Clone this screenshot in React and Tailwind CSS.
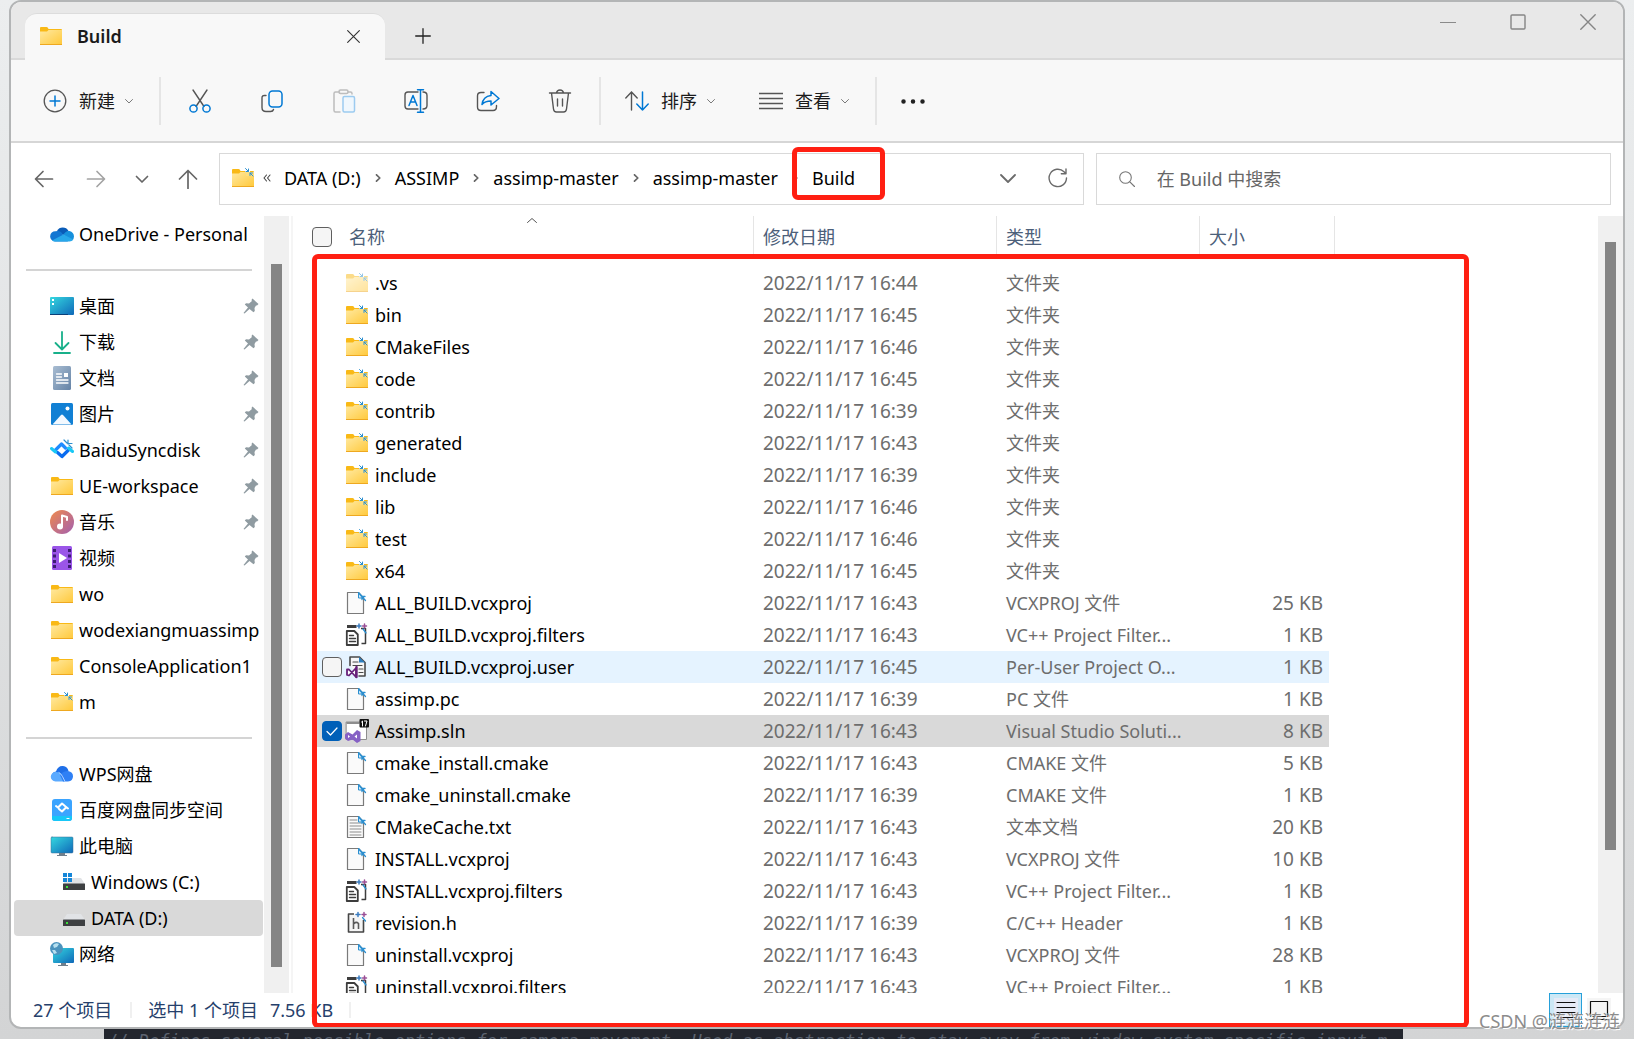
import React, { useState } from 'react';

const Svg = ({ className = 'w-6 h-6', viewBox = '0 0 24 24', children }) => (
  <svg
    className={`shrink-0 ${className}`}
    viewBox={viewBox}
    fill="none"
    strokeWidth="1.5"
    strokeLinecap="round"
    strokeLinejoin="round"
    aria-hidden="true"
  >
    {children}
  </svg>
);

// Two small arrows that mark an NTFS compressed item
const CompressedArrows = () => (
  <g stroke="#2b8fd0" strokeWidth="1">
    <path d="M14.500 2.500l3 3M17.500 3v2.500H15" />
    <path d="M22 10l-3-3M19 9.500V7h2.500" />
  </g>
);

const FolderIcon = ({ compressed, faded }) => (
  <Svg>
    <defs>
      <linearGradient id="folder" x1="0" y1="0" x2="1" y2="1">
        <stop offset="0" stopColor="#ffe9a0" />
        <stop offset="1" stopColor="#ffc93c" />
      </linearGradient>
    </defs>
    <g opacity={faded ? 0.5 : 1}>
      <path d="M1 4q0-1 1-1h5.500q1 0 1.500 1l.5 1h12.500q1 0 1 1v4H1z" fill="#f9b916" />
      <path d="M1 7.500h7l1.500-1.500H23v14.500H1z" fill="url(#folder)" />
      <path d="M1 20h22v1H1z" fill="#eea820" />
      {compressed && <path d="M14 2h5v4h-5z" fill="#fff" />}
      {compressed && <path d="M15 6h8v4h-8z" fill="#ffdf7e" />}
      {compressed && <CompressedArrows />}
    </g>
  </Svg>
);

const FileIcon = ({ lines }) => (
  <Svg>
    <path d="M2.500 1.500h11l5 5.500v15.500h-16z" fill="#fafafa" stroke="#7a7a7a" strokeWidth="1.2" />
    {lines && (
      <path d="M5 5h7M5 8h11M5 11h11M5 14h11M5 17h11M5 20h11" stroke="#8c8c8c" strokeWidth="1" />
    )}
    <path d="M13.500 1.500v5.500h5z" fill="#d7ecf8" stroke="#2b8fd0" strokeWidth="1" />
    <path d="M14 2.500l6.500 7M17 8.500v-3h3" stroke="#2b8fd0" strokeWidth="1.3" />
  </Svg>
);

const FiltersIcon = () => (
  <Svg>
    <path d="M2 3.500h9.500" stroke="#3d3d3d" strokeWidth="3" strokeLinecap="butt" />
    <path d="M16 5.500h4.500v15h-4" stroke="#3d3d3d" strokeLinecap="butt" />
    <path d="M1.800 8h7.500l3.500 3.500v10.500h-11z" fill="#fff" stroke="#3d3d3d" strokeWidth="1.800" />
    <path d="M4.500 12.500h4M4.500 15.500h6M4.500 18.500h6" stroke="#3d3d3d" strokeWidth="1.400" />
    <path d="M12 3h4M14 1v4" stroke="#3a7bbf" strokeWidth="1.500" />
    <path d="M17.500 3h4M19.500 1v4" stroke="#9b4f96" strokeWidth="1.500" />
    <path d="M21 10l-3-4" stroke="#2b8fd0" strokeWidth="1.300" />
  </Svg>
);

const UserProjectIcon = () => (
  <Svg>
    <path d="M5 10.500V2h9.500l5.500 5.500v13.500h-6" fill="#f7f7f7" stroke="#4a4a4a" strokeWidth="1.600" />
    <path d="M8 7h5M8 10.500h9M14 14h4M14 17.500h4" stroke="#4a4a4a" strokeWidth="1.200" />
    <path d="M14 2v5.500h6z" fill="#2d7fc0" />
    <path d="M2 14.500v5.500l2 .5 7-7.500v9l-7-7.500z" fill="#fff" stroke="#68217a" strokeWidth="1.800" />
    <path d="M11.500 12v10" stroke="#68217a" strokeWidth="2.400" />
  </Svg>
);

const SolutionIcon = () => (
  <Svg>
    <path d="M1.500 3h20v17.500h-20z" fill="#fff" stroke="#8e8e8e" strokeWidth="1" />
    <path d="M1.500 3h13v2h-13z" fill="#8e8e8e" />
    <path
      d="M0 15.500L3 13l4.500 2.500L12 11l3.500 2v9L12 24l-4.500-3.500L3 22l-3-2.500zM3 16v3l2-1.500zM12 15.500l-2.500 2 2.500 2z"
      fill="#8661c5"
      fillRule="evenodd"
    />
    <rect x="14.500" y="0" width="9.500" height="8.500" rx="1" fill="#111" />
    <path d="M16.500 3l1-1v5M19.500 2h2.500l-1.500 5" stroke="#fff" strokeWidth="1" />
  </Svg>
);

const HeaderIcon = () => (
  <Svg>
    <path
      d="M9 3H3.500v18h15V9"
      fill="#f5f5f5"
      stroke="#454545"
      strokeWidth="1.600"
      strokeLinecap="butt"
    />
    <path d="M8.500 7v11M8.500 13q2.500-3 5-.5V18" stroke="#5a5a5a" strokeWidth="1.600" strokeLinecap="butt" />
    <path d="M11 3.500h4M13 1.500v4" stroke="#3a7bbf" strokeWidth="1.500" />
    <path d="M17 3.500h4M19 1.500v4" stroke="#9b4f96" strokeWidth="1.500" />
    <path d="M20.500 10l-3-3.500" stroke="#2b8fd0" strokeWidth="1.300" />
  </Svg>
);

const FILE_ICONS = {
  hidden: <FolderIcon compressed faded />,
  folder: <FolderIcon compressed />,
  file: <FileIcon />,
  text: <FileIcon lines />,
  filters: <FiltersIcon />,
  user: <UserProjectIcon />,
  sln: <SolutionIcon />,
  header: <HeaderIcon />,
};

const OneDriveIcon = () => (
  <Svg>
    <path d="M7 9a6.500 6.500 0 0 1 11.500 0l-5 4z" fill="#0a5cb8" />
    <path d="M5 19.500A5 5 0 0 1 5.500 9.300q3-1 5.500.7l7 9.500z" fill="#1276d2" />
    <path d="M13.500 13q2-4.500 6-4 4.300 1 4.500 5.500a5 5 0 0 1-2 4z" fill="#1690dc" />
    <path d="M2 18.500l11.500-6 9.800 5q-1.300 2-3.800 2H5q-1.800 0-3-1z" fill="#28a8ea" />
  </Svg>
);

const DesktopIcon = () => (
  <Svg>
    <defs>
      <linearGradient id="screen" x1="0" y1="0" x2="1" y2="1">
        <stop offset="0" stopColor="#35d8e0" />
        <stop offset="1" stopColor="#0f68b8" />
      </linearGradient>
    </defs>
    <rect x="0" y="3" width="24" height="18" rx="1" fill="url(#screen)" />
    <path d="M2 5h2v2H2zM2 9h2v2H2z" fill="#fff" />
    <path d="M0 20h18v1H0z" fill="#0b3f78" />
  </Svg>
);

const DownloadIcon = () => (
  <Svg>
    <path d="M12 2v17M5.500 13l6.500 6.500 6.500-6.500M4 23h16" stroke="#18b08a" strokeWidth="1.800" />
  </Svg>
);

const DocumentsIcon = () => (
  <Svg>
    <defs>
      <linearGradient id="doc" x1="0" y1="0" x2="1" y2="1">
        <stop offset="0" stopColor="#a9bdd2" />
        <stop offset="1" stopColor="#6583a6" />
      </linearGradient>
    </defs>
    <rect x="3" y="0" width="18" height="24" rx="1.500" fill="url(#doc)" />
    <path d="M6.500 8h5M6.500 11h5M6.500 14h11.500M6.500 17h11.500" stroke="#fff" strokeWidth="1.300" />
    <path d="M14 7h4v4h-4z" fill="#fff" />
  </Svg>
);

const PicturesIcon = () => (
  <Svg>
    <rect x="1" y="1" width="22" height="22" rx="1.500" fill="#1180d4" />
    <circle cx="17.500" cy="6.500" r="2" fill="#fff" />
    <path d="M2.500 22.500l8.500-9.500q1-1 2 0l8.500 9.500z" fill="#f3f9ff" />
  </Svg>
);

const BaiduSyncIcon = () => (
  <Svg>
    <path d="M5 12.500l6.500-6.500 4 4" stroke="#1e8bff" strokeWidth="3.200" />
    <path d="M18.500 12l-6.500 6.500-4.500-4" stroke="#0a6cf0" strokeWidth="3.200" />
    <path d="M1.500 10.500l4 3.500M22.500 13.500l-4-3.500" stroke="#19c8f5" strokeWidth="3" />
    <path d="M14 2l3 3M22 10l-3-3M18 2v4M22 5.500h-3" stroke="#2b8fd0" strokeWidth="1.200" />
  </Svg>
);

const MusicIcon = () => (
  <Svg>
    <defs>
      <linearGradient id="music" x1="0" y1="0" x2="1" y2="1">
        <stop offset="0" stopColor="#f08a4c" />
        <stop offset="1" stopColor="#a35fb0" />
      </linearGradient>
    </defs>
    <circle cx="12" cy="12" r="12" fill="url(#music)" />
    <circle cx="10" cy="16.500" r="3" fill="#fff" />
    <path d="M12 16.500V5.500l5 1.500v3" stroke="#fff" strokeWidth="2" />
  </Svg>
);

const VideoIcon = () => (
  <Svg>
    <rect x="2" y="0" width="20" height="24" rx="1.500" fill="#9a55e8" />
    <path
      d="M3 3h3v3H3zM3 8.500h3v3H3zM3 14h3v3H3zM3 19h3v3H3zM18 3h3v3h-3zM18 8.500h3v3h-3zM18 14h3v3h-3zM18 19h3v3h-3z"
      fill="#3c1d73"
    />
    <path d="M9 7v10l8-5z" fill="#fff" />
  </Svg>
);

const WpsIcon = () => (
  <Svg>
    <path d="M6 19a4.800 4.800 0 0 1 0-9.500q2-6 7-5.500 4.500.5 5.500 5z" fill="#1f6fe8" />
    <path d="M5.500 19.500a4.700 4.700 0 0 1 0-9.500q5-.5 7 4l3 5.500z" fill="#5aaaff" />
    <path d="M13 19.500l-3-6.500q3-4 8-4 5 .8 5 5.300 0 5-5 5.200z" fill="#2f80f5" />
    <path d="M9 10.500q2 1 3.500 4l2.500 5" stroke="#cfe5ff" strokeWidth="0.800" />
  </Svg>
);

const BaiduSpaceIcon = () => (
  <Svg>
    <rect x="2" y="1" width="20" height="22" rx="3" fill="#3ba4ff" />
    <path d="M2 18h20v2q0 3-3 3H5q-3 0-3-3z" fill="#18c7f7" />
    <path d="M8 9.500l4-4 3 2.500M16 9.500l-4 4-3-2.500M6 8l2.500 2M18 10.500L15.500 8.500" stroke="#fff" strokeWidth="2" />
    <path d="M17 20.500h2" stroke="#fff" strokeWidth="1.200" />
  </Svg>
);

const ComputerIcon = () => (
  <Svg>
    <rect x="1" y="3" width="22" height="16" rx="1" fill="url(#screen)" stroke="#3b6f96" strokeWidth="0.500" />
    <path d="M9 19h6v2h2v1H7v-1h2z" fill="#6f7f8c" />
  </Svg>
);

const DriveIcon = ({ system }) => (
  <Svg>
    <path d="M5 8h14l4 6H1z" fill="#e1e3e6" />
    <rect x="1" y="13.500" width="22" height="6.500" rx="0.500" fill="#3e4042" />
    <path d="M4 16h2v2H4z" fill="#3ae03a" />
    {system && (
      <path d="M1 3h4v4H1zM6 3h4v4H6zM1 8h4v4H1zM6 8h4v4H6z" fill="#1586d8" />
    )}
  </Svg>
);

const NetworkIcon = () => (
  <Svg>
    <rect x="3" y="6" width="21" height="15" rx="1" fill="url(#screen)" />
    <path d="M11 21h5v2h2v1H8v-1h3z" fill="#6f7f8c" />
    <circle cx="6.500" cy="6.500" r="6.500" fill="#4b93bd" />
    <path d="M3 3q3-3 6-1l-2 3-3 1zM2 8l3 0 2 3-3 1z" fill="#b7e0ef" />
  </Svg>
);

const PinIcon = () => (
  <Svg className="w-4 h-4" viewBox="0 0 16 16">
    <path d="M9.500.500L15.500 6l-1.500 1.500-1 0-1.500 2.500.3 3-1.300 1.300L6.500 11l-5 4.500-1-.5L5 9.500 1.800 6.500 3 5.200l3 .2 2.700-2.200V1.500z" fill="#8f9ba1" />
  </Svg>
);

const ChevronDown = ({ className = 'w-2 h-2', color = '#6b6b6b' }) => (
  <Svg className={className} viewBox="0 0 8 8">
    <path d="M.5 2.500L4 6l3.500-3.500" stroke={color} strokeWidth="0.900" />
  </Svg>
);

const Close = ({ className, color }) => (
  <Svg className={className} viewBox="0 0 14 14">
    <path d="M.7.700l12.600 12.600M13.300.700L.7 13.300" stroke={color} strokeWidth="1.200" />
  </Svg>
);

const PINNED = [
  { label: '桌面', icon: <DesktopIcon />, pinned: true },
  { label: '下载', icon: <DownloadIcon />, pinned: true },
  { label: '文档', icon: <DocumentsIcon />, pinned: true },
  { label: '图片', icon: <PicturesIcon />, pinned: true },
  { label: 'BaiduSyncdisk', icon: <BaiduSyncIcon />, pinned: true },
  { label: 'UE-workspace', icon: <FolderIcon />, pinned: true },
  { label: '音乐', icon: <MusicIcon />, pinned: true },
  { label: '视频', icon: <VideoIcon />, pinned: true },
  { label: 'wo', icon: <FolderIcon /> },
  { label: 'wodexiangmuassimp', icon: <FolderIcon /> },
  { label: 'ConsoleApplication1', icon: <FolderIcon /> },
  { label: 'm', icon: <FolderIcon compressed /> },
];

const PLACES = [
  { label: 'WPS网盘', icon: <WpsIcon /> },
  { label: '百度网盘同步空间', icon: <BaiduSpaceIcon /> },
  { label: '此电脑', icon: <ComputerIcon /> },
  { label: 'Windows (C:)', icon: <DriveIcon system />, nested: true },
  { label: 'DATA (D:)', icon: <DriveIcon />, nested: true, active: true },
  { label: '网络', icon: <NetworkIcon /> },
];

const FILES = [
  ['hidden', '.vs', '16:44', '文件夹', ''],
  ['folder', 'bin', '16:45', '文件夹', ''],
  ['folder', 'CMakeFiles', '16:46', '文件夹', ''],
  ['folder', 'code', '16:45', '文件夹', ''],
  ['folder', 'contrib', '16:39', '文件夹', ''],
  ['folder', 'generated', '16:43', '文件夹', ''],
  ['folder', 'include', '16:39', '文件夹', ''],
  ['folder', 'lib', '16:46', '文件夹', ''],
  ['folder', 'test', '16:46', '文件夹', ''],
  ['folder', 'x64', '16:45', '文件夹', ''],
  ['file', 'ALL_BUILD.vcxproj', '16:43', 'VCXPROJ 文件', '25 KB'],
  ['filters', 'ALL_BUILD.vcxproj.filters', '16:43', 'VC++ Project Filter...', '1 KB'],
  ['user', 'ALL_BUILD.vcxproj.user', '16:45', 'Per-User Project O...', '1 KB'],
  ['file', 'assimp.pc', '16:39', 'PC 文件', '1 KB'],
  ['sln', 'Assimp.sln', '16:43', 'Visual Studio Soluti...', '8 KB'],
  ['file', 'cmake_install.cmake', '16:43', 'CMAKE 文件', '5 KB'],
  ['file', 'cmake_uninstall.cmake', '16:39', 'CMAKE 文件', '1 KB'],
  ['text', 'CMakeCache.txt', '16:43', '文本文档', '20 KB'],
  ['file', 'INSTALL.vcxproj', '16:43', 'VCXPROJ 文件', '10 KB'],
  ['filters', 'INSTALL.vcxproj.filters', '16:43', 'VC++ Project Filter...', '1 KB'],
  ['header', 'revision.h', '16:39', 'C/C++ Header', '1 KB'],
  ['file', 'uninstall.vcxproj', '16:43', 'VCXPROJ 文件', '28 KB'],
  ['filters', 'uninstall.vcxproj.filters', '16:43', 'VC++ Project Filter...', '1 KB'],
];

const CRUMBS = ['DATA (D:)', 'ASSIMP', 'assimp-master', 'assimp-master', 'Build'];

const CHECKBOX =
  'block w-5 h-5 appearance-none rounded border border-[#5f5f5f] bg-[#f5f5f5] checked:border-[#005fb8] checked:bg-[#005fb8]';

const TitleBar = () => (
  <header className="flex h-[58px] shrink-0 border-b-2 border-[#d9d9d9] bg-[#e8e8e8]">
    <div className="relative mt-[11px] -mb-0.5 ml-3.5 flex w-[360px] items-center rounded-t-xl border-t border-[#dcdcdc] bg-[#f8f8f8] pr-[25px] pb-0.5 pl-3.5">
      <FolderIcon />
      <h1 className="ml-3.5 flex-1 font-semibold text-[#1b1b1b]">Build</h1>
      <button type="button" aria-label="关闭标签页">
        <Close className="w-[13px] h-[13px]" color="#333" />
      </button>
    </div>
    <button type="button" aria-label="新标签页" className="ml-[30px] mt-3">
      <Svg className="w-4 h-4" viewBox="0 0 16 16">
        <path d="M8 .7v14.600M.7 8h14.600" stroke="#222" strokeWidth="1.300" />
      </Svg>
    </button>
    <div className="ml-auto flex h-10">
      <button type="button" aria-label="最小化" className="flex w-[70px] items-center justify-center">
        <Svg className="w-4 h-4" viewBox="0 0 16 16">
          <path d="M0 8.500h16" stroke="#8a8a8a" strokeWidth="1" />
        </Svg>
      </button>
      <button type="button" aria-label="最大化" className="flex w-[70px] items-center justify-center">
        <Svg className="w-4 h-4" viewBox="0 0 16 16">
          <rect x="1" y="1" width="14" height="14" rx="1" stroke="#858585" strokeWidth="1.400" />
        </Svg>
      </button>
      <button type="button" aria-label="关闭" className="flex w-[70px] items-center justify-center">
        <Close className="w-4 h-4" color="#858585" />
      </button>
    </div>
  </header>
);

const ToolButton = ({ label, children }) => (
  <button type="button" aria-label={label} className="flex h-12 w-[72px] items-center justify-center">
    {children}
  </button>
);

const Separator = () => <div className="h-12 w-0.5 shrink-0 bg-[#e5e5e5]" />;

const Toolbar = () => (
  <div className="flex h-[83px] shrink-0 items-center border-b-2 border-[#d6d6d6] bg-[#f8f8f8] text-[#1b1b1b]">
    <button type="button" className="flex w-[148px] items-center pl-8">
      <Svg>
        <circle cx="12" cy="12" r="10.800" stroke="#555" strokeWidth="1.300" />
        <path d="M12 7v10M7 12h10" stroke="#0078d4" />
      </Svg>
      <span className="mr-2.5 ml-3">新建</span>
      <ChevronDown />
    </button>
    <Separator />
    <div className="mx-[3px] flex">
      <ToolButton label="剪切">
        <Svg>
          <path d="M5 1l11 16.500M19 1L8 17.500" stroke="#555" strokeWidth="1.400" />
          <circle cx="5.500" cy="19.500" r="3.600" stroke="#0078d4" />
          <circle cx="18.500" cy="19.500" r="3.600" stroke="#0078d4" />
        </Svg>
      </ToolButton>
      <ToolButton label="复制">
        <Svg>
          <path d="M6 6.500H4.500q-2.500 0-2.500 2.500v9.500q0 4 4 4h4.500q2.500 0 3-2" stroke="#555" strokeWidth="1.400" />
          <rect x="9" y="2" width="13" height="16" rx="3.500" stroke="#0078d4" />
        </Svg>
      </ToolButton>
      <ToolButton label="粘贴">
        <Svg>
          <path d="M7.500 3H3.500Q2 3 2 4.500v17Q2 23 3.500 23H8M16 3h2.500Q20 3 20 4.500V5" stroke="#bdbdbd" strokeWidth="1.500" />
          <rect x="7" y="1" width="9" height="3.500" rx="1.500" stroke="#bdbdbd" />
          <rect x="11" y="7.500" width="11.500" height="15.500" rx="1.500" stroke="#9ccbf0" fill="#f0f7fd" />
        </Svg>
      </ToolButton>
      <ToolButton label="重命名">
        <Svg>
          <path d="M14 3H4Q1 3 1 6v11q0 3 3 3h10M19 3q4 0 4 3.500v10q0 3.500-4 3.500" stroke="#555" strokeWidth="1.400" />
          <path d="M5 16.500l4-10 4 10M6.500 13h5M16.500 1v22M13.500.8h6M13.500 23.200h6" stroke="#0078d4" />
        </Svg>
      </ToolButton>
      <ToolButton label="共享">
        <Svg>
          <path d="M8 3.500H5Q1.500 3.500 1.500 7v11q0 3.500 3.500 3.500h12q3.500 0 3.500-4v-1" stroke="#555" strokeWidth="1.400" />
          <path d="M15 2.500l8 7-8 6.500v-4q-6 0-9 3.500Q7 7.500 15 6.500z" stroke="#0078d4" />
        </Svg>
      </ToolButton>
      <ToolButton label="删除">
        <Svg>
          <path d="M1.500 4h21M8.500 4Q9 1 12 1t3.500 3M3.500 4l2 16q.3 3 3 3h7q2.700 0 3-3l2-16M9.500 10v7M14.500 10v7" stroke="#555" strokeWidth="1.400" />
        </Svg>
      </ToolButton>
    </div>
    <Separator />
    <button type="button" className="ml-6 flex items-center">
      <Svg>
        <path d="M6.500 21V3M.8 9l5.700-6 5.700 6" stroke="#555" strokeWidth="1.400" />
        <path d="M17.500 3v18M11.800 15l5.700 6 5.700-6" stroke="#0078d4" />
      </Svg>
      <span className="mr-2.5 ml-3">排序</span>
      <ChevronDown />
    </button>
    <button type="button" className="mr-[26px] ml-11 flex items-center">
      <Svg>
        <path d="M0 4.500h24M0 9.500h24M0 14.500h24M0 19.500h24" stroke="#555" strokeWidth="1.300" />
      </Svg>
      <span className="mr-2.5 ml-3">查看</span>
      <ChevronDown />
    </button>
    <Separator />
    <button type="button" aria-label="更多" className="ml-6">
      <Svg>
        <path d="M2.500 12.500h.01M12 12.500h.01M21.500 12.500h.01" stroke="#222" strokeWidth="4.500" />
      </Svg>
    </button>
  </div>
);

const AddressBar = () => (
  <div className="flex h-[73px] shrink-0 items-start pt-2.5 pr-3 pl-[7px]">
    <div className="flex h-[52px]">
      <button type="button" aria-label="后退" className="flex w-[52px] items-center justify-center">
        <Svg className="w-5 h-5" viewBox="0 0 20 20">
          <path d="M18.500 10H2M9 2.500L1.500 10 9 17.500" stroke="#666" strokeWidth="1.700" />
        </Svg>
      </button>
      <button type="button" aria-label="前进" className="flex w-[52px] items-center justify-center">
        <Svg className="w-5 h-5" viewBox="0 0 20 20">
          <path d="M1.500 10H18M11 2.500l7.500 7.500-7.500 7.500" stroke="#a3a3a3" strokeWidth="1.700" />
        </Svg>
      </button>
      <button type="button" aria-label="最近浏览的位置" className="flex w-10 items-center justify-center">
        <Svg className="w-4 h-4" viewBox="0 0 16 16">
          <path d="M2.500 5.500L8 11l5.500-5.500" stroke="#666" strokeWidth="1.700" />
        </Svg>
      </button>
      <button type="button" aria-label="向上" className="flex w-[52px] items-center justify-center">
        <Svg className="w-5 h-5" viewBox="0 0 20 20">
          <path d="M10 19.500V1.500M1.500 10L10 1.500l8.500 8.500" stroke="#666" strokeWidth="1.700" />
        </Svg>
      </button>
    </div>

    <nav className="ml-[5px] flex h-[52px] flex-[63_1_0%] items-center border border-[#d9d9d9] pr-[15px] pb-0.5 pl-[11px] whitespace-nowrap text-black">
      <FolderIcon compressed />
      <Svg className="w-2 h-2 ml-2" viewBox="0 0 8 8">
        <path d="M3.500 1L1 4l2.500 3M7 1L4.500 4 7 7" stroke="#444" strokeWidth="1.100" />
      </Svg>
      <ol className="ml-[13px] flex items-center gap-[13px]">
        {CRUMBS.map((crumb, i) => (
          <li key={i} className="flex items-center gap-[13px]">
            {i > 0 && (
              <Svg className="w-2 h-2" viewBox="0 0 8 8">
                <path d="M2.500.800L5.800 4 2.500 7.200" stroke="#666" strokeWidth="1.700" />
              </Svg>
            )}
            <a href="#" className="relative">
              {crumb}
              {i === CRUMBS.length - 1 && (
                <span className="absolute -top-[19px] -right-[30px] -bottom-2.5 -left-5 rounded-md border-5 border-[#ff1f12]" />
              )}
            </a>
          </li>
        ))}
      </ol>
      <button type="button" aria-label="历史记录" className="mr-8 ml-auto">
        <ChevronDown className="w-4 h-4" />
      </button>
      <button type="button" aria-label="刷新">
        <Svg className="w-5 h-5" viewBox="0 0 20 20">
          <path d="M18.500 10a8.700 8.700 0 1 1-2.500-6.200l1.500 1.500M18 1v4.700h-4.700" stroke="#6b6b6b" strokeWidth="1.400" />
        </Svg>
      </button>
    </nav>

    <label className="ml-3 flex h-[52px] flex-[37_1_0%] items-center border border-[#d9d9d9] pl-[22px]">
      <Svg className="w-4 h-4" viewBox="0 0 16 16">
        <circle cx="6.500" cy="6.500" r="5.800" stroke="#777" strokeWidth="1.100" />
        <path d="M10.800 10.800l4.700 4.700" stroke="#777" strokeWidth="1.200" />
      </Svg>
      <input
        type="search"
        aria-label="搜索"
        placeholder="在 Build 中搜索"
        className="ml-[22px] min-w-0 flex-1 outline-none placeholder:text-[#666]"
      />
    </label>
  </div>
);

const SidebarItem = ({ item }) => (
  <li className={`mr-px ml-[3px] rounded-sm ${item.active ? 'bg-[#d9d9d9]' : ''}`}>
    <a
      href="#"
      className={`flex h-9 items-center gap-[5px] pr-1 whitespace-nowrap ${item.nested ? 'pl-12' : 'pl-9'}`}
    >
      {item.icon}
      <span className="flex-1">{item.label}</span>
      {item.pinned && <PinIcon />}
    </a>
  </li>
);

const Divider = () => (
  <li className="flex h-9 items-center pr-3 pl-[15px]">
    <hr className="flex-1 border-t-2 border-[#d4d4d4]" />
  </li>
);

const Sidebar = () => (
  <aside className="flex w-[282px] shrink-0 border-r-2 border-[#f5f5f5] text-black">
    <ul className="w-[253px]">
      <SidebarItem item={{ label: 'OneDrive - Personal', icon: <OneDriveIcon /> }} />
      <Divider />
      {PINNED.map((item) => (
        <SidebarItem key={item.label} item={item} />
      ))}
      <Divider />
      {PLACES.map((item) => (
        <SidebarItem key={item.label} item={item} />
      ))}
    </ul>
    <div className="w-[25px] bg-[#f0f0f0] px-[7px] pt-12 pb-[26px]">
      <div className="h-full bg-[#858585]" />
    </div>
  </aside>
);

const ColumnHeader = ({ children }) => (
  <th className="p-0 align-top font-normal">
    <div className="flex h-[43px] items-center border-l border-[#e5e5e5] pb-0.5 pl-[9px]">{children}</div>
  </th>
);

const FileTable = () => {
  const [selected, setSelected] = useState('Assimp.sln');
  const hovered = 'ALL_BUILD.vcxproj.user';

  return (
    <main className="flex min-w-0 flex-1 justify-between">
      <table className="ml-[19px] w-[1023px] shrink-0 table-fixed self-start text-left whitespace-nowrap">
        <colgroup>
          <col className="w-[33px]" />
          <col className="w-[408px]" />
          <col className="w-[243px]" />
          <col className="w-[203px]" />
          <col className="w-[130px]" />
          <col className="w-[6px]" />
        </colgroup>
        <thead className="text-[#4c607a]">
          <tr className="h-[51px]">
            <th className="p-0 align-top">
              <div className="flex h-[43px] items-center pb-0.5">
                <input type="checkbox" aria-label="全选" className={CHECKBOX} />
              </div>
            </th>
            <th className="relative p-0 align-top font-normal">
              <div className="flex h-[43px] items-center pb-0.5 pl-1">名称</div>
              <Svg className="absolute top-0 left-[182px] w-2.5 h-2.5" viewBox="0 0 10 10">
                <path d="M.5 6.500L5 2.500l4.500 4" stroke="#555" strokeWidth="1" />
              </Svg>
            </th>
            <ColumnHeader>修改日期</ColumnHeader>
            <ColumnHeader>类型</ColumnHeader>
            <ColumnHeader>大小</ColumnHeader>
            <td className="p-0 align-top">
              <div className="h-[43px] border-r border-[#e5e5e5]" />
            </td>
          </tr>
        </thead>
        <tbody className="text-[#6d6d6d]">
          {FILES.map(([icon, name, time, type, size]) => {
            const isSelected = name === selected;
            const showBox = isSelected || name === hovered;
            const bg = isSelected ? 'bg-[#d9d9d9]' : name === hovered ? 'bg-[#e5f3ff]' : '';
            return (
              <tr key={name} className="h-8">
                <td className={`p-0 pl-2.5 ${bg}`}>
                  {showBox && (
                    <span className="relative block w-5">
                      <input
                        type="checkbox"
                        aria-label={name}
                        checked={isSelected}
                        onChange={() => setSelected(isSelected ? '' : name)}
                        className={CHECKBOX}
                      />
                      {isSelected && (
                        <Svg className="pointer-events-none absolute inset-0 w-5 h-5" viewBox="0 0 20 20">
                          <path d="M5 10.500l3.500 3.500L15 7" stroke="#fff" strokeWidth="1.200" />
                        </Svg>
                      )}
                    </span>
                  )}
                </td>
                <td className={`p-0 text-black ${bg}`}>
                  <div className="flex items-center gap-1.5">
                    {FILE_ICONS[icon]}
                    {name}
                  </div>
                </td>
                <td className={`p-0 pl-2.5 text-[19px] leading-6 ${bg}`}>2022/11/17 {time}</td>
                <td className={`p-0 pl-2.5 ${bg}`}>{type}</td>
                <td className={`p-0 pr-1.5 text-right text-[19px] leading-6 ${bg}`}>{size}</td>
                <td className="p-0" />
              </tr>
            );
          })}
        </tbody>
      </table>
      <div className="w-[25px] shrink-0 bg-[#f0f0f0] px-[7px] pt-[26px] pb-[143px]">
        <div className="h-full bg-[#858585]" />
      </div>
    </main>
  );
};

const StatusBar = () => (
  <footer className="flex h-[34px] shrink-0 items-center pl-[22px] whitespace-nowrap text-[#26406b]">
    <span>27 个项目</span>
    <span className="mr-4 ml-[18px] h-4 w-0.5 bg-[#f0f0f0]" />
    <span>选中 1 个项目</span>
    <span className="ml-3">7.56 KB</span>
    <span className="ml-4 h-4 w-0.5 bg-[#f0f0f0]" />
    <div className="mr-3 ml-auto flex h-full items-center">
      <button
        type="button"
        aria-label="详细信息"
        className="flex h-full w-[33px] items-center justify-center border border-[#26a0da] bg-[#cce8f6]"
      >
        <Svg className="w-6 h-6 bg-[#e6eaf6]">
          <path d="M3 4.500h18M3 9.500h18M3 14.500h18M3 19.500h18" stroke="#111" strokeWidth="1" />
        </Svg>
      </button>
      <button type="button" aria-label="大图标" className="ml-[5px]">
        <Svg className="w-6 h-6 bg-[#f5f5f5]">
          <path d="M3.500 3.500h17v15h-17zM3 21.500h18" stroke="#111" strokeWidth="1.200" />
        </Svg>
      </button>
    </div>
  </footer>
);

const App = () => (
  <div className="relative flex h-screen flex-col overflow-hidden bg-linear-to-b from-[#eceeef] to-[#d3d4d5] font-['Noto_Sans','Noto_Sans_CJK_SC',sans-serif] text-lg leading-6">
    <div className="relative mx-[9px] flex min-h-0 flex-1 flex-col overflow-hidden rounded-xl border-2 border-[#b3b5b6] bg-white">
      <TitleBar />
      <Toolbar />
      <AddressBar />
      <div className="flex min-h-0 flex-1 overflow-hidden">
        <Sidebar />
        <FileTable />
      </div>
      <StatusBar />
      {/* red frame round the build output */}
      <div className="pointer-events-none absolute top-[252px] -bottom-px left-[301px] w-[1157px] rounded-md border-5 border-[#ff1f12]" />
    </div>

    {/* editor window that shows below the explorer */}
    <div className="mr-[231px] ml-[104px] h-2.5 shrink-0 overflow-hidden bg-[#23262e] pl-1 font-['DejaVu_Sans_Mono',monospace] text-[17px] leading-6 whitespace-nowrap text-[#5c6370] italic">
      // Defines several possible options for camera movement. Used as abstraction to stay away from
      window-system specific input m
    </div>

    <p className="absolute right-3.5 bottom-1.5 text-[#8c8c8c] [text-shadow:1px_1px_0_#fff]">
      CSDN @涟涟涟涟
    </p>
  </div>
);

export default App;
